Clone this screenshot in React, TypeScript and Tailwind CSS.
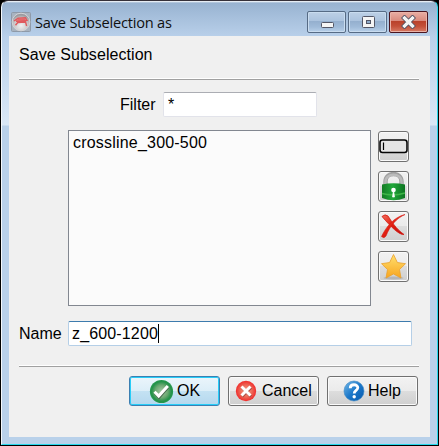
import type { ReactNode } from "react";

function AppIcon() {
  return (
    <svg width="20" height="20" viewBox="0 0 20 20" className="shrink-0">
      <defs>
        <radialGradient id="orb" cx=".5" cy=".7" r=".6">
          <stop offset="0" stopColor="#f1f1f1" />
          <stop offset=".75" stopColor="#c3c1c3" />
          <stop offset="1" stopColor="#9b9ba0" />
        </radialGradient>
      </defs>
      <rect x=".5" y=".5" width="19" height="19" rx="1" fill="#a8b3c0" stroke="#8f9aa8" />
      <circle cx="10" cy="10" r="8.8" fill="url(#orb)" stroke="#d4d4d6" />
      <path d="M3 9L7 6.3L14.5 5.8L16 8.3L5 9.3M14.2 8.5L15.6 14M8 9L4.5 13.2M7 10.5L14 10" stroke="#e05a5e" strokeWidth="1.4" fill="none" />
      <path d="M5 8.5L8 6.5L14 6.3L14.5 8L8 9Z" fill="#e4686b" />
    </svg>
  );
}

function CaptionButton({ close, children }: { close?: boolean; children: ReactNode }) {
  const tone = close
    ? "border-[#4a1520] bg-[linear-gradient(#e9aea4_0%,#d98a7d_45%,#b9412b_46%,#c34f38_70%,#d77b66_100%)] shadow-[inset_0_0_0_1px_#e9b3a8]"
    : "border-[#566b85] bg-[linear-gradient(#bdd0e6_0%,#abc3de_45%,#94afce_46%,#a0bbd9_75%,#b8d0e9_100%)] shadow-[inset_0_0_0_1px_#c9dcef]";
  return (
    <div className={`flex h-[22px] w-[39px] items-center justify-center rounded-[2px] border ${tone}`}>
      {children}
    </div>
  );
}

function ToolButton({ children }: { children: ReactNode }) {
  return (
    <button className="flex h-[31px] w-[31px] items-center justify-center rounded-[3px] border border-[#707070] bg-[linear-gradient(#f2f2f2_0%,#ebebeb_49%,#dddddd_50%,#cfcfcf_100%)] shadow-[inset_0_0_0_1px_#fafafa]">
      {children}
    </button>
  );
}

function DialogButton({ primary, children }: { primary?: boolean; children: ReactNode }) {
  const tone = primary
    ? "border-[#3c7fb1] bg-[linear-gradient(#ebf5fb_0%,#dceef8_49%,#c4e2f3_50%,#b5d8ee_100%)] shadow-[inset_0_0_0_1px_#27cdf8]"
    : "border-[#707070] bg-[linear-gradient(#f2f2f2_0%,#ebebeb_49%,#dddddd_50%,#cfcfcf_100%)] shadow-[inset_0_0_0_1px_#fafafa]";
  return (
    <button className={`flex h-[30px] w-[91px] items-center rounded-[3px] border ${tone}`}>
      {children}
    </button>
  );
}

function Separator() {
  return <div className="h-[2px] w-[400px] border-t border-b border-t-white border-b-[#a0a0a0]" />;
}

export default function App() {
  return (
    <div className="h-[446px] w-[439px] overflow-hidden bg-black pl-px font-['Liberation_Sans',Arial,sans-serif] text-[16px] leading-[20px] text-black">
      <div className="flex h-[445px] w-[437px] flex-col overflow-hidden rounded-t-[7px] border border-b-[#27d8ec] border-l-[#f4f8fc] border-r-[#27d8ec] border-t-[#35313a] bg-[linear-gradient(#ffffff_0px,#98b3d1_2px,#a8c1dd_18px,#b9d0ea_36px,#dae8f6_124px,#b9d1ea_125px,#b9d1ea_100%)] pl-[7px] pr-[7px]">
        <header className="flex h-[35px] shrink-0 items-start">
          <div className="flex pl-[2px] pt-[11px]">
            <AppIcon />
            <span className="ml-[4px] mt-px whitespace-nowrap font-['Open_Sans','Noto_Sans',sans-serif] text-[14.6px] leading-[19px] tracking-[-0.2px] text-[#101010]">
              Save Subselection as
            </span>
          </div>
          <div className="ml-auto mr-[2px] flex gap-[2px] pt-[10px]">
            <CaptionButton>
              <svg width="14" height="16" viewBox="0 0 14 16"><rect x="1.5" y="8.5" width="12" height="5" rx="1" fill="#f5f5f5" stroke="#535666" /></svg>
            </CaptionButton>
            <CaptionButton>
              <svg width="14" height="14" viewBox="0 0 14 14"><rect x="1.5" y="1.5" width="12" height="11" rx="1" fill="#f5f5f5" stroke="#535666" /><rect x="5.5" y="5.5" width="4" height="3" fill="#8fabc9" stroke="#535666" /></svg>
            </CaptionButton>
            <CaptionButton close>
              <svg width="15" height="14" viewBox="0 0 15 14"><path d="M3.5 3L11.5 11M11.5 3L3.5 11" stroke="#555465" strokeWidth="5" strokeLinecap="square" /><path d="M3.5 3L11.5 11M11.5 3L3.5 11" stroke="#f4f4f4" strokeWidth="3.2" strokeLinecap="square" /></svg>
            </CaptionButton>
          </div>
        </header>

        <main className="flex h-[401px] w-[421px] shrink-0 flex-col bg-[#f0f0f0] pl-[10px]">
          <h1 className="mt-[9px] h-[20px] whitespace-nowrap tracking-[0.06px]">Save Subselection</h1>
          <div className="mt-[13px]"><Separator /></div>

          <label className="mt-[12px] flex h-[25px] items-center pl-[102px]">
            <span className="-ml-px w-[43px]">Filter</span>
            <input defaultValue="*" className="h-[25px] w-[154px] rounded-[2px] border border-[#e2e3ea] border-t-[#abadb3] bg-white px-[4px] outline-none" />
          </label>

          <div className="mt-[13px] flex pl-[49px]">
            <div className="h-[176px] w-[303px] border border-[#828790] bg-[#fbfbfb] pl-[4px] pt-[2px] tracking-[0.2px]">
              crossline_300-500
            </div>
            <div className="ml-[7px] mt-px flex flex-col gap-[9px]">
              <ToolButton>
                <svg width="29" height="29" viewBox="0 0 29 29"><rect x="1" y="8" width="27" height="12.5" rx="2.5" fill="#e5e5e5" stroke="#050505" strokeWidth="1.6" /><path d="M4.5 10.5V18" stroke="#000" strokeWidth="1.2" /></svg>
              </ToolButton>
              <ToolButton>
                <svg width="29" height="29" viewBox="0 0 29 29">
                  <defs><linearGradient id="lock"><stop stopColor="#137b24" /><stop offset=".45" stopColor="#21a83a" /><stop offset="1" stopColor="#0d7321" /></linearGradient></defs>
                  <path d="M6.5 13V9.5C6.5-.5 22.5-.5 22.5 9.5V13" fill="none" stroke="#a0a0a0" strokeWidth="4.4" />
                  <path d="M6.5 13V9.5C6.5.5 22.5.5 22.5 9.5V13" fill="none" stroke="#bbb" strokeWidth="2.5" />
                  <path d="M3 12.5Q14.5 10 26 12.5V26Q14.5 30.5 3 26Z" fill="url(#lock)" />
                  <path d="M3 21.5Q14 24.5 26 21" stroke="#3fb548" strokeWidth="1.8" fill="none" />
                  <circle cx="14.5" cy="18" r="2.3" fill="#fff" /><path d="M14.5 18L15.5 25H13.5Z" fill="#fff" stroke="#fff" strokeWidth=".7" />
                </svg>
              </ToolButton>
              <ToolButton>
                <svg width="29" height="29" viewBox="0 0 29 29">
                  <defs><linearGradient id="cross" x2="1" y2="1"><stop stopColor="#f07060" /><stop offset=".45" stopColor="#e32012" /><stop offset="1" stopColor="#b90b0b" /></linearGradient></defs>
                  <path d="M3 4.5Q6 1.5 9 4C12 8.5 17 17 25 22.5C20 23 12 15 3 4.5Z" fill="url(#cross)" stroke="#d71b12" strokeWidth=".8" />
                  <path d="M26 2.5C18 6 11 13.5 7 24Q5 27 2.5 24.5C7 15 15 5 26 2.5Z" fill="url(#cross)" stroke="#d71b12" strokeWidth=".6" />
                </svg>
              </ToolButton>
              <ToolButton>
                <svg width="29" height="29" viewBox="0 0 29 29">
                  <defs><linearGradient id="star" x2="0" y2="1"><stop stopColor="#ffe06f" /><stop offset="1" stopColor="#f8a51e" /></linearGradient></defs>
                  <ellipse cx="14.5" cy="26" rx="10" ry="1.5" fill="#999" opacity=".5" />
                  <path d="M14.5 2.5L18.4 10.5L26.5 11.7L20.5 17.5L22 26L14.5 22L7 26L8.5 17.5L2.5 11.7L10.6 10.5Z" fill="url(#star)" stroke="#e9a02c" strokeWidth=".8" strokeLinejoin="round" />
                </svg>
              </ToolButton>
            </div>
          </div>

          <label className="mt-[15px] flex h-[25px] items-center">
            <span className="w-[49px]">Name</span>
            <span className="flex h-[25px] w-[344px] items-center rounded-[2px] border border-[#b5cfe7] border-t-[#3d7bad] bg-white pl-[3px]">
              <span className="tracking-[0.15px]">z_600-1200</span><i className="h-[19px] w-px bg-black" />
            </span>
          </label>
          <div className="mt-[19px]"><Separator /></div>

          <footer className="mt-[9px] flex gap-[8px] pl-[110px]">
            <DialogButton primary>
              <svg className="ml-[19px] mr-[3px] shrink-0" width="25" height="25" viewBox="0 0 25 25">
                <defs><radialGradient id="ok"><stop stopColor="#a5c9a5" /><stop offset=".55" stopColor="#6aa871" /><stop offset=".85" stopColor="#24924a" /><stop offset="1" stopColor="#26994e" /></radialGradient></defs>
                <circle cx="12.5" cy="12.5" r="11.6" fill="url(#ok)" />
                <path d="M6 13.7L10 18.2L19 8" fill="none" stroke="#45664c" strokeWidth="3" />
                <path d="M5.5 12.7L9.7 17L18.8 7" fill="none" stroke="#fff" strokeWidth="3" />
              </svg>
              OK
            </DialogButton>
            <DialogButton>
              <svg className="ml-[6px] mr-[5px] shrink-0" width="22" height="22" viewBox="0 0 22 22">
                <defs><radialGradient id="cancel"><stop stopColor="#f9a38b" /><stop offset=".6" stopColor="#ed6656" /><stop offset="1" stopColor="#f02c2b" /></radialGradient></defs>
                <circle cx="11" cy="11" r="10.2" fill="url(#cancel)" />
                <path d="M7 7.5L16 16.5M16 7.5L7 16.5" stroke="#a94e46" strokeWidth="3" />
                <path d="M6.5 6.5L15.5 15.5M15.5 6.5L6.5 15.5" stroke="#fff" strokeWidth="3" />
              </svg>
              Cancel
            </DialogButton>
            <DialogButton>
              <svg className="ml-[15px] mr-[3px] shrink-0" width="22" height="22" viewBox="0 0 22 22">
                <defs><linearGradient id="help" x2="1" y2="1"><stop stopColor="#75b9e8" /><stop offset=".5" stopColor="#1c78c9" /><stop offset="1" stopColor="#0759ad" /></linearGradient></defs>
                <circle cx="11" cy="11" r="10" fill="url(#help)" stroke="#3b86c4" strokeWidth=".6" />
                <path d="M7.2 8.2C7.2 3.5 15 3.8 14.8 7.8C14.7 10.5 11.2 10.3 11.2 13.4" fill="none" stroke="#fff" strokeWidth="2.8" />
                <circle cx="11.2" cy="16.8" r="1.7" fill="#fff" />
              </svg>
              Help
            </DialogButton>
          </footer>
        </main>
      </div>
    </div>
  );
}
